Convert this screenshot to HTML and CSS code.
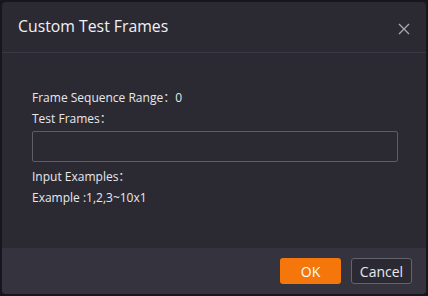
FILE: index.html
```html
<!DOCTYPE html>
<html lang="en">
<head>
    <meta charset="UTF-8">
    <meta name="viewport" content="width=device-width, initial-scale=1.0">
    <title>Custom Test Frames</title>
    <link rel="stylesheet" href="styles.css">
</head>
<body>
    <div class="dialog">
        <div class="dialog-header">
            <h2 class="dialog-title">Custom Test Frames</h2>
            <button class="close-button" aria-label="Close">
                <svg width="12" height="12" viewBox="0 0 12 12">
                    <path d="M1 1 L11 11 M11 1 L1 11" stroke="#a9a8b0" stroke-width="1.3" fill="none"/>
                </svg>
            </button>
        </div>

        <div class="dialog-body">
            <div class="row">Frame Sequence Range：0</div>
            <div class="row">Test Frames：</div>
            <input class="frames-input" type="text">
            <div class="row">Input Examples：</div>
            <div class="row">Example :1,2,3~10x1</div>
        </div>

        <div class="dialog-footer">
            <button class="ok-button">OK</button>
            <button class="cancel-button">Cancel</button>
        </div>
    </div>
</body>
</html>
```

FILE: styles.css
```css
* {
    margin: 0;
    padding: 0;
    box-sizing: border-box;
    font-family: 'Open Sans', 'Noto Sans', 'Noto Sans CJK SC', sans-serif;
}

body {
    background: #17161c;
    color: #e8e8ec;
    height: 100vh;
    overflow: hidden;
    padding: 2px;
}

.dialog {
    width: 424px;
    height: 292px;
    background: #2b2a33;
    border-radius: 4px;
    display: flex;
    flex-direction: column;
    overflow: hidden;
}

.dialog-header {
    height: 51px;
    display: flex;
    align-items: center;
    justify-content: space-between;
    padding: 0 14px 0 16px;
    border-bottom: 1px solid #3a3943;
}

.dialog-title {
    font-size: 15.8px;
    font-weight: normal;
    color: #f0f0f3;
    margin-top: -2px;
}

.close-button {
    background: none;
    border: none;
    width: 16px;
    height: 16px;
    margin-top: 3px;
    display: flex;
    align-items: center;
    justify-content: center;
    cursor: pointer;
}

.dialog-body {
    flex: 1;
    padding: 34px 28px 0 30px;
    font-size: 12px;
}

.row {
    height: 21px;
    line-height: 21px;
}

.frames-input {
    display: block;
    width: 100%;
    height: 31px;
    margin: 2px 0 4px;
    background: #2b2a33;
    border: 1px solid #5e5d66;
    border-radius: 2px;
    color: #e8e8ec;
    outline: none;
}

.dialog-footer {
    height: 46px;
    background: #35343e;
    display: flex;
    justify-content: flex-end;
    align-items: center;
    gap: 10px;
    padding: 0 14px 0 0;
}

.ok-button, .cancel-button {
    width: 61px;
    height: 26px;
    border-radius: 3px;
    font-size: 14px;
    cursor: pointer;
}

.ok-button {
    background: #f5760a;
    border: none;
    color: white;
}

.cancel-button {
    background: #2b2a33;
    border: 1px solid #64636b;
    color: #e8e8ec;
}
```
